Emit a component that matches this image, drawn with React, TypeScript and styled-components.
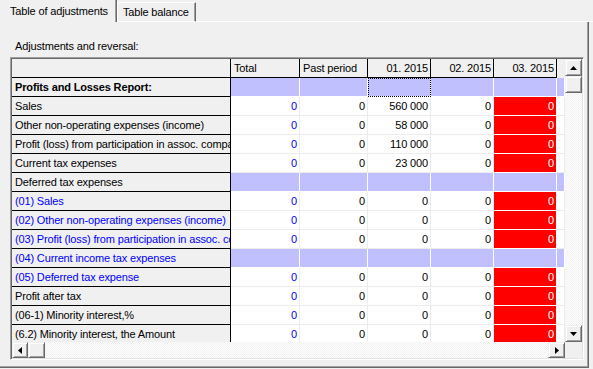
import React from "react";
import styled, { createGlobalStyle, css } from "styled-components";

const GlobalStyle = createGlobalStyle`
  * {
    box-sizing: border-box;
  }
  html,
  body {
    margin: 0;
    padding: 0;
    background: #f0f0f0;
  }
  body {
    font-family: "Liberation Sans", Arial, sans-serif;
    font-size: 11px;
    letter-spacing: -0.15px;
    color: #000;
  }
`;

const COLS = [219, 69, 68, 63, 63, 63, 8];

const Window = styled.div`
  display: flex;
  flex-direction: column;
  width: 593px;
  height: 369px;
  overflow: hidden;
  background: #f0f0f0;
`;

const TabStrip = styled.div`
  display: flex;
  align-items: flex-end;
  height: 22px;
`;

const Tab = styled.div<{ $active?: boolean }>`
  white-space: nowrap;
  line-height: 13px;
  ${(p) =>
    p.$active
      ? css`
          height: 22px;
          padding: 5px 8px 0 10px;
          border-right: 1px solid #696969;
          box-shadow: inset -1px 0 #a0a0a0;
        `
      : css`
          height: 20px;
          padding: 3px 6px 0 5px;
          border-top: 1px solid #fff;
          border-left: 1px solid #fff;
          border-bottom: 1px solid #fff;
          border-right: 1px solid #696969;
          box-shadow: inset -1px 0 #a0a0a0;
        `}
`;

const TabFiller = styled.div`
  flex: 1;
  height: 1px;
  background: #fff;
`;

const Panel = styled.div`
  width: 589px;
  height: 346px;
  padding: 17px 0 0 10px;
  border-right: 1px solid #696969;
  border-bottom: 1px solid #696969;
  box-shadow: inset -1px -1px #a0a0a0;
`;

const Caption = styled.div`
  height: 18px;
  padding-left: 5px;
  line-height: 14px;
`;

const GridFrame = styled.div`
  display: grid;
  grid-template-columns: 553px 17px;
  grid-template-rows: 283px 16px;
  width: 574px;
  height: 303px;
  border: 1px solid;
  border-color: #a0a0a0 #fff #fff #a0a0a0;
  box-shadow: inset 1px 1px #696969, inset -1px -1px #e3e3e3;
  padding: 1px;
`;

const Cells = styled.div`
  overflow: hidden;
  background: #fff;
`;

const Row = styled.div`
  display: flex;
  height: 19px;
`;

type Kind = "fixed" | "head" | "headFill" | "white" | "blue" | "red";

const kindStyles: Record<Kind, ReturnType<typeof css>> = {
  fixed: css`
    background: #f0f0f0;
    border-right: 1px solid #000;
    border-bottom: 1px solid #000;
  `,
  head: css`
    background: #f0f0f0;
    border-right: 1px solid #000;
    border-bottom: 1px solid #000;
  `,
  headFill: css`
    background: #f0f0f0;
  `,
  white: css`
    background: #fff;
    border-right: 1px solid #ececec;
    border-bottom: 1px solid #ececec;
  `,
  blue: css`
    background: #c0c0ff;
    border-right: 1px solid #fff;
    border-bottom: 1px solid #fff;
  `,
  red: css`
    background: #ff0000;
    color: #fff;
    border-right: 1px solid #fff;
    border-bottom: 1px solid #fff;
  `,
};

const Cell = styled.div<{
  $w: number;
  $kind: Kind;
  $right?: boolean;
  $blueText?: boolean;
  $bold?: boolean;
  $focus?: boolean;
}>`
  flex: none;
  width: ${(p) => p.$w}px;
  height: 19px;
  padding: 0 2px 0 3px;
  line-height: 18px;
  white-space: nowrap;
  overflow: hidden;
  text-align: ${(p) => (p.$right ? "right" : "left")};
  font-weight: ${(p) => (p.$bold ? "bold" : "normal")};
  color: ${(p) => (p.$blueText ? "#0000ff" : "#000")};
  ${(p) => kindStyles[p.$kind]}
  ${(p) =>
    p.$focus &&
    css`
      outline: 1px dotted #000;
      outline-offset: -1px;
    `}
`;

const VScroll = styled.div`
  display: flex;
  flex-direction: column;
  background: repeating-conic-gradient(#fff 0 25%, #f0f0f0 0 50%) 0 0 / 2px 2px;
`;

const HScroll = styled.div`
  display: flex;
  background: repeating-conic-gradient(#fff 0 25%, #f0f0f0 0 50%) 0 0 / 2px 2px;
`;

const Track = styled.div`
  flex: 1;
`;

const Corner = styled.div`
  background: #f0f0f0;
`;

const ScrollButton = styled.div<{ $w: number; $h: number }>`
  display: flex;
  align-items: center;
  justify-content: center;
  flex: none;
  width: ${(p) => p.$w}px;
  height: ${(p) => p.$h}px;
  background: #f0f0f0;
  border: 1px solid;
  border-color: #f0f0f0 #696969 #696969 #f0f0f0;
  box-shadow: inset 1px 1px #fff, inset -1px -1px #a0a0a0;
`;

const Arrow = ({ dir }: { dir: "up" | "down" | "left" | "right" }) => {
  const pts = {
    up: "3.5,0 7,4 0,4",
    down: "0,0 7,0 3.5,4",
    left: "4,0 4,7 0,3.5",
    right: "0,0 4,3.5 0,7",
  }[dir];
  const vertical = dir === "up" || dir === "down";
  return (
    <svg
      width={vertical ? 7 : 4}
      height={vertical ? 4 : 7}
      viewBox={vertical ? "0 0 7 4" : "0 0 4 7"}
    >
      <polygon points={pts} fill="#000" />
    </svg>
  );
};

type RowData = {
  label: string;
  blueLabel?: boolean;
  bold?: boolean;
  section?: boolean;
  jan?: string;
};

const rows: RowData[] = [
  { label: "Profits and Losses Report:", bold: true, section: true },
  { label: "Sales", jan: "560 000" },
  { label: "Other non-operating expenses (income)", jan: "58 000" },
  { label: "Profit (loss) from participation in assoc. companies", jan: "110 000" },
  { label: "Current tax expenses", jan: "23 000" },
  { label: "Deferred tax expenses", section: true },
  { label: "(01) Sales", blueLabel: true },
  { label: "(02) Other non-operating expenses (income)", blueLabel: true },
  { label: "(03) Profit (loss) from participation in assoc. companies", blueLabel: true },
  { label: "(04) Current income tax expenses", blueLabel: true, section: true },
  { label: "(05) Deferred tax expense", blueLabel: true },
  { label: "Profit after tax" },
  { label: "(06-1) Minority interest,%" },
  { label: "(6.2) Minority interest, the Amount" },
];

const headers = ["Total", "Past period", "01. 2015", "02. 2015", "03. 2015"];

function App() {
  return (
    <Window>
      <GlobalStyle />
      <TabStrip>
        <Tab $active>Table of adjustments</Tab>
        <Tab>Table balance</Tab>
        <TabFiller />
      </TabStrip>
      <Panel>
        <Caption>Adjustments and reversal:</Caption>
        <GridFrame>
          <Cells>
            <Row>
              <Cell $w={COLS[0]} $kind="fixed" />
              {headers.map((h, i) => (
                <Cell key={h} $w={COLS[i + 1]} $kind="head" $right={i >= 2}>
                  {h}
                </Cell>
              ))}
              <Cell $w={COLS[6]} $kind="headFill" />
            </Row>
            {rows.map((r, ri) => (
              <Row key={r.label}>
                <Cell $w={COLS[0]} $kind="fixed" $bold={r.bold} $blueText={r.blueLabel}>
                  {r.label}
                </Cell>
                {r.section ? (
                  <>
                    {headers.map((h, i) => (
                      <Cell
                        key={h}
                        $w={COLS[i + 1]}
                        $kind="blue"
                        $focus={ri === 0 && i === 2}
                      />
                    ))}
                    <Cell $w={COLS[6]} $kind="blue" />
                  </>
                ) : (
                  <>
                    <Cell $w={COLS[1]} $kind="white" $right $blueText>
                      0
                    </Cell>
                    <Cell $w={COLS[2]} $kind="white" $right>
                      0
                    </Cell>
                    <Cell $w={COLS[3]} $kind="white" $right>
                      {r.jan ?? "0"}
                    </Cell>
                    <Cell $w={COLS[4]} $kind="white" $right>
                      0
                    </Cell>
                    <Cell $w={COLS[5]} $kind="red" $right>
                      0
                    </Cell>
                    <Cell $w={COLS[6]} $kind="white" />
                  </>
                )}
              </Row>
            ))}
          </Cells>
          <VScroll>
            <ScrollButton $w={17} $h={17}>
              <Arrow dir="up" />
            </ScrollButton>
            <ScrollButton $w={17} $h={17} />
            <Track />
            <ScrollButton $w={17} $h={17}>
              <Arrow dir="down" />
            </ScrollButton>
          </VScroll>
          <HScroll>
            <ScrollButton $w={16} $h={16}>
              <Arrow dir="left" />
            </ScrollButton>
            <ScrollButton $w={17} $h={16} />
            <Track />
            <ScrollButton $w={17} $h={16}>
              <Arrow dir="right" />
            </ScrollButton>
          </HScroll>
          <Corner />
        </GridFrame>
      </Panel>
    </Window>
  );
}

export default App;
